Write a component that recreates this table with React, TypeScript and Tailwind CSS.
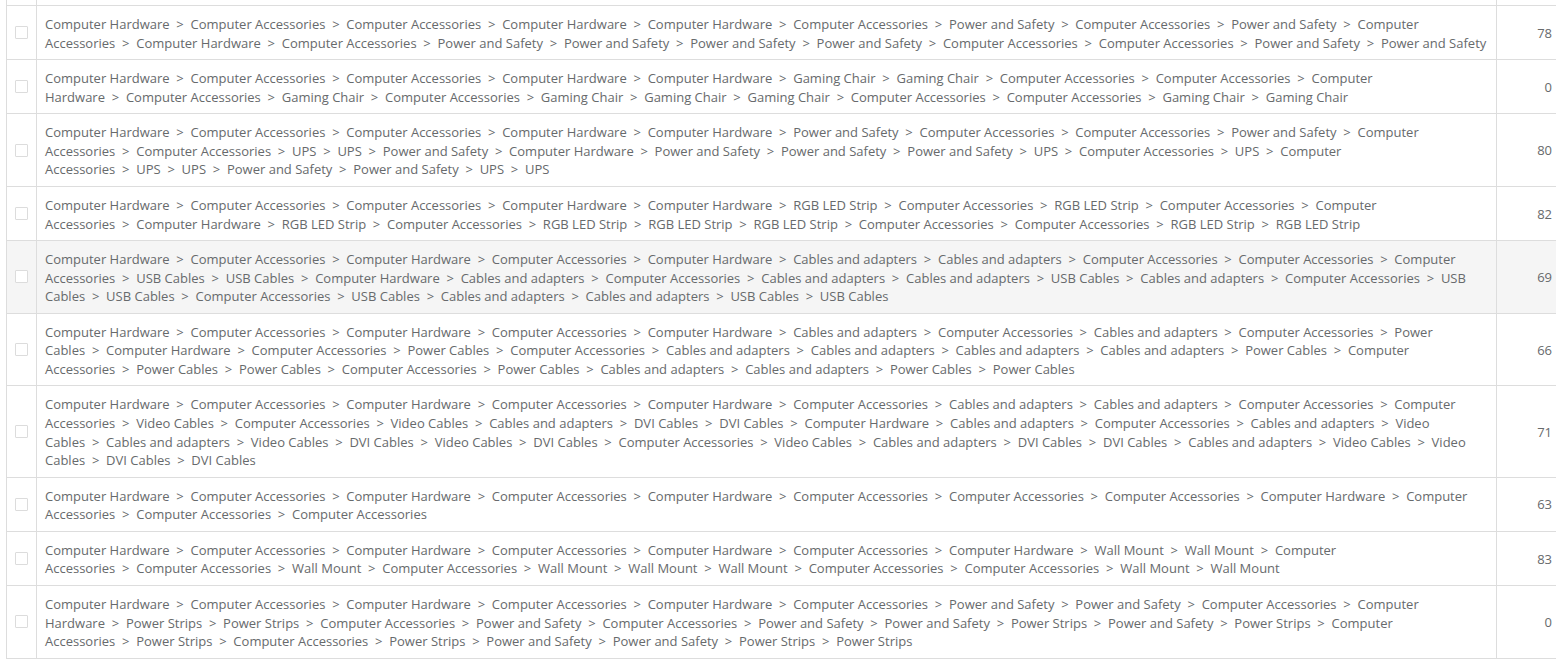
import React from "react";

const rows: { path: string; n: string; hl?: boolean }[] = [
  {
    path: "Computer Hardware > Computer Accessories > Computer Accessories > Computer Hardware > Computer Hardware > Computer Accessories > Power and Safety > Computer Accessories > Power and Safety > Computer Accessories > Computer Hardware > Computer Accessories > Power and Safety > Power and Safety > Power and Safety > Power and Safety > Computer Accessories > Computer Accessories > Power and Safety > Power and Safety",
    n: "78",
  },
  {
    path: "Computer Hardware > Computer Accessories > Computer Accessories > Computer Hardware > Computer Hardware > Gaming Chair > Gaming Chair > Computer Accessories > Computer Accessories > Computer Hardware > Computer Accessories > Gaming Chair > Computer Accessories > Gaming Chair > Gaming Chair > Gaming Chair > Computer Accessories > Computer Accessories > Gaming Chair > Gaming Chair",
    n: "0",
  },
  {
    path: "Computer Hardware > Computer Accessories > Computer Accessories > Computer Hardware > Computer Hardware > Power and Safety > Computer Accessories > Computer Accessories > Power and Safety > Computer Accessories > Computer Accessories > UPS > UPS > Power and Safety > Computer Hardware > Power and Safety > Power and Safety > Power and Safety > UPS > Computer Accessories > UPS > Computer Accessories > UPS > UPS > Power and Safety > Power and Safety > UPS > UPS",
    n: "80",
  },
  {
    path: "Computer Hardware > Computer Accessories > Computer Accessories > Computer Hardware > Computer Hardware > RGB LED Strip > Computer Accessories > RGB LED Strip > Computer Accessories > Computer Accessories > Computer Hardware > RGB LED Strip > Computer Accessories > RGB LED Strip > RGB LED Strip > RGB LED Strip > Computer Accessories > Computer Accessories > RGB LED Strip > RGB LED Strip",
    n: "82",
  },
  {
    path: "Computer Hardware > Computer Accessories > Computer Hardware > Computer Accessories > Computer Hardware > Cables and adapters > Cables and adapters > Computer Accessories > Computer Accessories > Computer Accessories > USB Cables > USB Cables > Computer Hardware > Cables and adapters > Computer Accessories > Cables and adapters > Cables and adapters > USB Cables > Cables and adapters > Computer Accessories > USB Cables > USB Cables > Computer Accessories > USB Cables > Cables and adapters > Cables and adapters > USB Cables > USB Cables",
    n: "69",
    hl: true,
  },
  {
    path: "Computer Hardware > Computer Accessories > Computer Hardware > Computer Accessories > Computer Hardware > Cables and adapters > Computer Accessories > Cables and adapters > Computer Accessories > Power Cables > Computer Hardware > Computer Accessories > Power Cables > Computer Accessories > Cables and adapters > Cables and adapters > Cables and adapters > Cables and adapters > Power Cables > Computer Accessories > Power Cables > Power Cables > Computer Accessories > Power Cables > Cables and adapters > Cables and adapters > Power Cables > Power Cables",
    n: "66",
  },
  {
    path: "Computer Hardware > Computer Accessories > Computer Hardware > Computer Accessories > Computer Hardware > Computer Accessories > Cables and adapters > Cables and adapters > Computer Accessories > Computer Accessories > Video Cables > Computer Accessories > Video Cables > Cables and adapters > DVI Cables > DVI Cables > Computer Hardware > Cables and adapters > Computer Accessories > Cables and adapters > Video Cables > Cables and adapters > Video Cables > DVI Cables > Video Cables > DVI Cables > Computer Accessories > Video Cables > Cables and adapters > DVI Cables > DVI Cables > Cables and adapters > Video Cables > Video Cables > DVI Cables > DVI Cables",
    n: "71",
  },
  {
    path: "Computer Hardware > Computer Accessories > Computer Hardware > Computer Accessories > Computer Hardware > Computer Accessories > Computer Accessories > Computer Accessories > Computer Hardware > Computer Accessories > Computer Accessories > Computer Accessories",
    n: "63",
  },
  {
    path: "Computer Hardware > Computer Accessories > Computer Hardware > Computer Accessories > Computer Hardware > Computer Accessories > Computer Hardware > Wall Mount > Wall Mount > Computer Accessories > Computer Accessories > Wall Mount > Computer Accessories > Wall Mount > Wall Mount > Wall Mount > Computer Accessories > Computer Accessories > Wall Mount > Wall Mount",
    n: "83",
  },
  {
    path: "Computer Hardware > Computer Accessories > Computer Hardware > Computer Accessories > Computer Hardware > Computer Accessories > Power and Safety > Power and Safety > Computer Accessories > Computer Hardware > Power Strips > Power Strips > Computer Accessories > Power and Safety > Computer Accessories > Power and Safety > Power and Safety > Power Strips > Power and Safety > Power Strips > Computer Accessories > Power Strips > Computer Accessories > Power Strips > Power and Safety > Power and Safety > Power Strips > Power Strips",
    n: "0",
  },
];

function pathText(text: string) {
  return text.split(" > ").join("\u00a0\u00a0>\u00a0\u00a0");
}

export default function App() {
  return (
    <div
      className="w-[1556px] h-[661px] overflow-hidden bg-white text-[13px] leading-[1.42857] text-[#676a6c]"
      style={{ fontFamily: '"Open Sans", "Liberation Sans", sans-serif' }}
    >
      <div className="ml-[6px] w-[1556px] border-l border-[#dddddd]">
        {/* partial row above */}
        <div className="flex h-[6px] border-b border-[#dddddd]">
          <div className="w-[30px] border-r border-[#dddddd]" />
          <div className="w-[1460px] border-r border-[#dddddd]" />
          <div className="flex-1" />
        </div>
        {rows.map((r, i) => (
          <div
            key={i}
            className={`flex border-b border-[#dddddd] ${r.hl ? "bg-[#f5f5f5]" : "bg-white"}`}
          >
            <div className="w-[30px] shrink-0 border-r border-[#dddddd] flex items-center justify-center">
              <div className="w-[13px] h-[13px] border border-[#dcdcdc] bg-white rounded-[1px]" />
            </div>
            <div className="w-[1460px] shrink-0 border-r border-[#dddddd] px-[8px] pt-[9px] pb-[7px]">
              {pathText(r.path)}
            </div>
            <div className="w-[62px] shrink-0 flex items-center justify-end pr-[7px] pt-[1px]">
              {r.n}
            </div>
          </div>
        ))}
      </div>
    </div>
  );
}
